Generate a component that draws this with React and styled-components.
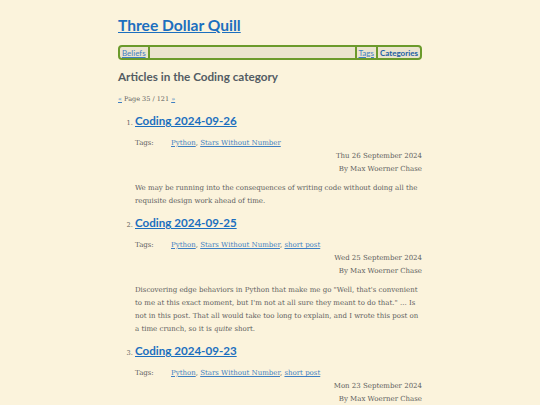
import React from 'react';
import { styled, createGlobalStyle } from 'styled-components';

const GlobalStyle = createGlobalStyle`
  body {
    margin: 0;
    background-color: #fbf3dc;
    font-family: "DejaVu Serif", "Liberation Serif", serif;
    color: #5e5e5e;
  }
`

const Page = styled.div`
  width: 304px;
  margin: 0 auto;
  padding-top: 14px;
`

const SiteTitle = styled.h1`
  margin: 0;
  font-family: Lato, "Noto Sans", sans-serif;
  font-size: 15.6px;
  line-height: 22px;
  font-weight: 700;
  a {
    color: #1c6fbf;
  }
`

const Nav = styled.nav`
  margin-top: 9px;
  height: 15px;
  box-sizing: border-box;
  border: 2px solid #6b9a2c;
  border-radius: 4px;
  background-color: #ebe4cf;
  display: flex;
  align-items: stretch;
  font-family: Lato, "Noto Sans", sans-serif;
  font-size: 8px;
`

const NavItem = styled.a`
  display: flex;
  align-items: center;
  padding: 0 2px;
  color: ${(p) => (p.$current ? '#1d5fa3' : '#3e7fc2')};
  font-weight: ${(p) => (p.$current ? 700 : 400)};
  text-decoration: ${(p) => (p.$current ? 'none' : 'underline')};
  border-left: ${(p) => (p.$sepLeft ? '2px solid #6b9a2c' : 'none')};
  border-right: ${(p) => (p.$sepRight ? '2px solid #6b9a2c' : 'none')};
`

const Spacer = styled.div`
  flex: 1;
`

const Heading = styled.h2`
  margin: 8px 0 0;
  font-family: Lato, "Noto Sans", sans-serif;
  font-size: 11.7px;
  line-height: 16px;
  font-weight: 700;
  color: #535c63;
`

const Pager = styled.p`
  margin: 9px 0 0;
  font-size: 6.5px;
  line-height: 12px;
  a {
    color: #3e7fc2;
  }
`

const ArticleList = styled.ol`
  margin: 7px 0 0;
  padding-left: 17px;
  li::marker {
    font-size: 6.6px;
    color: #5e5e5e;
  }
`

const Article = styled.li`
  margin-bottom: 6.5px;
`

const ArticleTitle = styled.h3`
  margin: 0;
  font-family: Lato, "Noto Sans", sans-serif;
  font-size: 11.6px;
  line-height: 18px;
  font-weight: 700;
  a {
    color: #1c6fbf;
  }
`

const TagRow = styled.div`
  margin-top: 7px;
  margin-bottom: 1px;
  display: flex;
  font-size: 7px;
  line-height: 12px;
  a {
    color: #3e7fc2;
  }
`

const TagLabel = styled.span`
  width: 36px;
`

const Meta = styled.div`
  text-align: right;
  font-size: 7px;
  line-height: 12.5px;
`

const Summary = styled.p`
  margin: 6.5px 0 0;
  font-size: 7px;
  line-height: 13px;
`

const articles = [
  {
    title: 'Coding 2024-09-26',
    tags: ['Python', 'Stars Without Number'],
    date: 'Thu 26 September 2024',
    summary: <>We may be running into the consequences of writing code without doing all the requisite design work ahead of time.</>,
  },
  {
    title: 'Coding 2024-09-25',
    tags: ['Python', 'Stars Without Number', 'short post'],
    date: 'Wed 25 September 2024',
    summary: <>Discovering edge behaviors in Python that make me go "Well, that's convenient to me at this exact moment, but I'm not at all sure they meant to do that." ... Is not in this post. That all would take too long to explain, and I wrote this post on a time crunch, so it is <em>quite</em> short.</>,
  },
  {
    title: 'Coding 2024-09-23',
    tags: ['Python', 'Stars Without Number', 'short post'],
    date: 'Mon 23 September 2024',
  },
]

const App = () => {
  return (
    <>
      <GlobalStyle />
      <Page>
        <SiteTitle><a href="#">Three Dollar Quill</a></SiteTitle>
        <Nav>
          <NavItem href="#" $sepRight>Beliefs</NavItem>
          <Spacer />
          <NavItem href="#" $sepLeft $sepRight>Tags</NavItem>
          <NavItem href="#" $current>Categories</NavItem>
        </Nav>
        <Heading>Articles in the Coding category</Heading>
        <Pager><a href="#">«</a> Page 35 / 121 <a href="#">»</a></Pager>
        <ArticleList>
          {articles.map((article) => (
            <Article key={article.title}>
              <ArticleTitle><a href="#">{article.title}</a></ArticleTitle>
              <TagRow>
                <TagLabel>Tags:</TagLabel>
                <span>
                  {article.tags.map((tag, i) => (
                    <React.Fragment key={tag}>
                      {i > 0 && ', '}
                      <a href="#">{tag}</a>
                    </React.Fragment>
                  ))}
                </span>
              </TagRow>
              <Meta>{article.date}</Meta>
              <Meta>By Max Woerner Chase</Meta>
              {article.summary && <Summary>{article.summary}</Summary>}
            </Article>
          ))}
        </ArticleList>
      </Page>
    </>
  )
}

export default App;
